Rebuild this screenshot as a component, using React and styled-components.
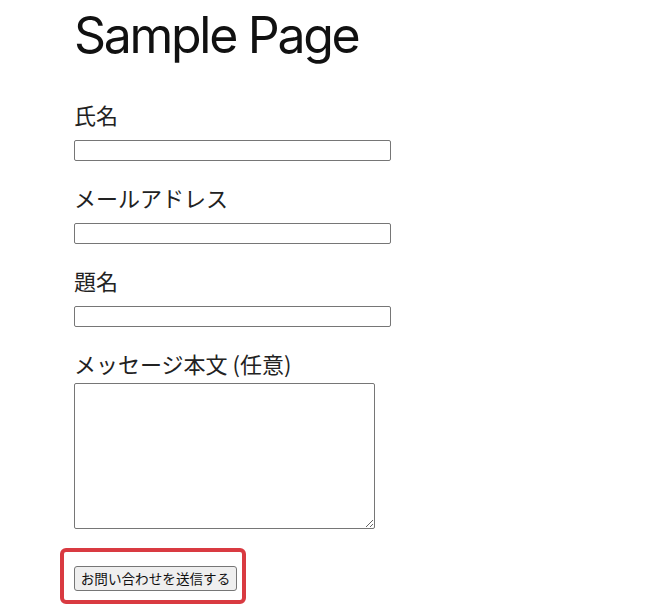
import styled, { createGlobalStyle } from 'styled-components';

const GlobalStyle = createGlobalStyle`
    html, body {
        margin: 0;
        padding: 0;
        background: #ffffff;
    }
    body {
        font-family: "Noto Sans CJK JP", "Noto Sans", sans-serif;
        color: #222222;
    }
`

const Page = styled.main`
    width: 660px;
    min-height: 613px;
    padding: 5px 0 0 74px;
    box-sizing: border-box;
`

const Title = styled.h1`
    margin: 0;
    font-family: Inter, "Liberation Sans", sans-serif;
    font-weight: 400;
    font-size: 50px;
    line-height: 60px;
    letter-spacing: -2.3px;
    color: #111111;
`

const Form = styled.form`
    display: flex;
    flex-direction: column;
    align-items: flex-start;
    margin-top: 34px;
`

const Field = styled.label`
    display: flex;
    flex-direction: column;
    align-items: flex-start;
    margin-bottom: ${({ $last }) => ($last ? '19px' : '21px')};
`

const FieldName = styled.span`
    font-size: 22px;
    line-height: 30px;
    color: #222222;
    margin-bottom: ${({ $tight }) => ($tight ? '5px' : '11px')};
`

const TextInput = styled.input`
    width: 317px;
    height: 21px;
    margin: 0;
    padding: 1px 2px;
    box-sizing: border-box;
    border: 1px solid #767676;
    border-radius: 2px;
    background: #ffffff;
    font-size: 13px;
`

const TextArea = styled.textarea`
    width: 301px;
    height: 146px;
    margin: 0;
    padding: 2px;
    box-sizing: border-box;
    border: 1px solid #767676;
    border-radius: 2px;
    background: #ffffff;
    font-size: 13px;
    resize: both;
`

const Highlight = styled.div`
    width: 186px;
    height: 56px;
    margin-left: -14px;
    padding: 13px 0 0 10px;
    box-sizing: border-box;
    border: 4px solid #d93a41;
    border-radius: 6px;
`

const SubmitButton = styled.button`
    width: 163px;
    height: 25px;
    margin: 0;
    padding: 0 4px;
    box-sizing: border-box;
    border: 1px solid #767676;
    border-radius: 3px;
    background: #efefef;
    color: #111111;
    font-family: "Noto Sans CJK JP", "Noto Sans", sans-serif;
    font-size: 13.6px;
    line-height: 1;
    text-align: center;
    white-space: nowrap;
    cursor: pointer;
`

const fields = ['氏名', 'メールアドレス', '題名']

export default function App() {
    return (
        <>
            <GlobalStyle />
            <Page>
                <Title>Sample Page</Title>
                <Form onSubmit={(e) => e.preventDefault()}>
                    {fields.map((name) => (
                        <Field key={name}>
                            <FieldName>{name}</FieldName>
                            <TextInput type="text" />
                        </Field>
                    ))}
                    <Field $last>
                        <FieldName $tight>メッセージ本文 (任意)</FieldName>
                        <TextArea />
                    </Field>
                    <Highlight>
                        <SubmitButton type="submit">お問い合わせを送信する</SubmitButton>
                    </Highlight>
                </Form>
            </Page>
        </>
    )
}
